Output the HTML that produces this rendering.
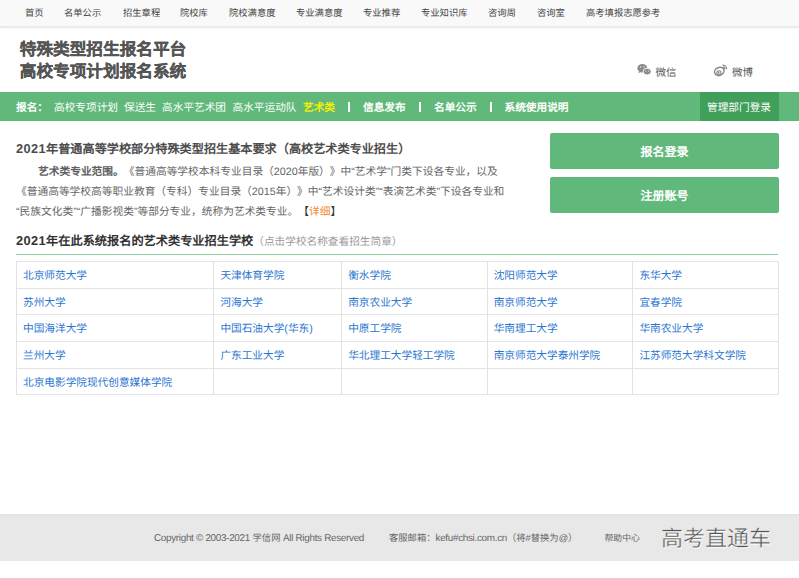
<!DOCTYPE html>
<html lang="zh-CN">
<head>
<meta charset="utf-8">
<style>
*{margin:0;padding:0;box-sizing:border-box;}
html,body{width:799px;height:578px;overflow:hidden;background:#fff;}
body{text-rendering:geometricPrecision;text-spacing-trim:space-all;font-family:"Liberation Sans",sans-serif;color:#555;position:relative;}
.abs{position:absolute;white-space:nowrap;}
#topnav{position:absolute;left:0;top:0;width:799px;height:28px;background:#f9f9f9;border-bottom:2px solid #ebebeb;box-shadow:0 1px 2px rgba(0,0,0,0.03);}
#topnav span{position:absolute;top:7px;font-size:9.3px;line-height:12px;color:#444;}
#title{left:19.8px;top:38.5px;font-size:16.65px;line-height:22px;font-weight:bold;color:#555;-webkit-text-stroke:0.25px #555;}
.sns{font-size:10.5px;line-height:12px;color:#555;top:66.5px;}
#greenbar{position:absolute;left:0;top:92px;width:799px;height:29px;background:#60b97a;}
#greenbar span{position:absolute;top:9.7px;font-size:10.67px;line-height:13px;color:#fff;white-space:nowrap;}
#greenbar b{font-weight:bold;}
#admin{position:absolute;left:699.5px;top:92px;width:79.5px;height:29px;background:#40a05a;}
h1{position:absolute;left:16px;top:140.8px;font-size:12.15px;line-height:16px;font-weight:bold;color:#4c4c4c;white-space:nowrap;}
.p{position:absolute;font-size:10.72px;line-height:14px;color:#666;white-space:nowrap;}
.btn{position:absolute;left:550px;width:229px;height:36px;background:#60b97a;border-radius:2px;color:#fff;font-weight:bold;font-size:12px;line-height:38px;text-align:center;}
h2{position:absolute;left:16px;top:233px;font-size:12.2px;line-height:16px;font-weight:bold;color:#333;white-space:nowrap;}
.d{letter-spacing:0.4px;font-size:12.8px;}
h2 small{font-weight:normal;font-size:10.67px;color:#999;}
#gline{position:absolute;left:16px;top:254px;width:762px;height:1px;background:#8fcf9f;}
table{position:absolute;left:16px;top:261px;border-collapse:collapse;table-layout:fixed;}
td{border:1px solid #e3e3e3;height:26.7px;padding:1.4px 0 0 6px;font-size:10.67px;color:#2b76d2;white-space:nowrap;vertical-align:middle;}
#footer{position:absolute;left:0;top:514px;width:799px;height:47px;background:linear-gradient(#e3e3e3,#e8e8e8 4px);}
#footer span{position:absolute;top:18px;font-size:9.3px;line-height:12px;color:#666;white-space:nowrap;}
#footer em{font-style:normal;font-size:9.9px;letter-spacing:-0.3px;}
#wm{position:absolute;left:661px;top:526px;font-size:22px;line-height:26px;color:#555;-webkit-text-stroke:0.4px #e8e8e8;text-shadow:0.8px 0.8px 0.6px #fff;white-space:nowrap;font-weight:300;}
</style>
</head>
<body>
<div id="topnav">
<span style="left:25px">首页</span>
<span style="left:64px">名单公示</span>
<span style="left:123px">招生章程</span>
<span style="left:180px">院校库</span>
<span style="left:229px">院校满意度</span>
<span style="left:296px">专业满意度</span>
<span style="left:363px">专业推荐</span>
<span style="left:421px">专业知识库</span>
<span style="left:488px">咨询周</span>
<span style="left:537px">咨询室</span>
<span style="left:586px">高考填报志愿参考</span>
</div>

<div id="title" class="abs">特殊类型招生报名平台<br>高校专项计划报名系统</div>

<svg class="abs" style="left:630px;top:60px" width="24" height="20" viewBox="0 0 24 20">
<ellipse cx="12.3" cy="8.3" rx="4.9" ry="4.3" fill="#8a8a8a"/>
<path d="M9 11.5L8.3 13.2 10.3 12.2Z" fill="#8a8a8a"/>
<ellipse cx="17.2" cy="11.6" rx="4" ry="3.4" fill="#8a8a8a" stroke="#fff" stroke-width="0.9"/>
<circle cx="10.6" cy="6.9" r="0.65" fill="#fff"/><circle cx="13.9" cy="6.9" r="0.65" fill="#fff"/>
<circle cx="15.9" cy="11" r="0.55" fill="#fff"/><circle cx="18.5" cy="11" r="0.55" fill="#fff"/>
</svg>
<div class="abs sns" style="left:655.5px">微信</div>
<svg class="abs" style="left:710px;top:60px" width="20" height="20" viewBox="0 0 20 20">
<ellipse cx="9.3" cy="11.4" rx="4.9" ry="3.9" transform="rotate(-22 9.3 11.4)" fill="none" stroke="#8a8a8a" stroke-width="1.5"/>
<ellipse cx="8.9" cy="12.6" rx="2.1" ry="1.9" fill="none" stroke="#8a8a8a" stroke-width="1.1"/>
<circle cx="8.6" cy="12.5" r="0.9" fill="#8a8a8a"/>
<path d="M12.6 5.2A4.1 4.1 0 0 1 16.7 9.3M12.6 7.1A2.2 2.2 0 0 1 14.8 9.3" fill="none" stroke="#8a8a8a" stroke-width="1.2"/>
</svg>
<div class="abs sns" style="left:732px">微博</div>

<div id="greenbar">
<span style="left:16px"><b>报名：</b></span>
<span style="left:54px">高校专项计划</span>
<span style="left:124px">保送生</span>
<span style="left:162px">高水平艺术团</span>
<span style="left:232.5px">高水平运动队</span>
<span style="left:303px;color:#f5f000"><b>艺术类</b></span>
<i style="position:absolute;left:348.3px;top:10px;width:1.7px;height:10px;background:#fff"></i>
<span style="left:363px"><b>信息发布</b></span>
<i style="position:absolute;left:419.3px;top:10px;width:1.7px;height:10px;background:#fff"></i>
<span style="left:434px"><b>名单公示</b></span>
<i style="position:absolute;left:490.3px;top:10px;width:1.7px;height:10px;background:#fff"></i>
<span style="left:504.5px"><b>系统使用说明</b></span>
</div>
<div id="admin"></div>
<div class="abs" style="left:707px;top:102px;font-size:10.67px;line-height:13px;color:#fff">管理部门登录</div>

<h1><span class="d">2021</span>年普通高等学校部分特殊类型招生基本要求（高校艺术类专业招生）</h1>
<div class="p" style="left:38px;top:165px"><b style="color:#5e5e5e">艺术类专业范围。</b>《普通高等学校本科专业目录（2020年版）》中“艺术学”门类下设各专业，以及</div>
<div class="p" style="left:16px;top:184.5px">《普通高等学校高等职业教育（专科）专业目录（2015年）》中“艺术设计类”“表演艺术类”下设各专业和</div>
<div class="p" style="left:16px;top:204.5px">“民族文化类”“广播影视类”等部分专业，统称为艺术类专业。<span style="color:#333">【</span><span style="color:#f0892a">详细</span><span style="color:#333">】</span></div>

<div class="btn" style="top:133px">报名登录</div>
<div class="btn" style="top:177px">注册账号</div>

<h2><span class="d">2021</span>年在此系统报名的艺术类专业招生学校<small>（点击学校名称查看招生简章）</small></h2>
<div id="gline"></div>

<table>
<colgroup><col style="width:197.4px"><col style="width:127.8px"><col style="width:145.5px"><col style="width:145.7px"><col style="width:145.7px"></colgroup>
<tr><td>北京师范大学</td><td>天津体育学院</td><td>衡水学院</td><td>沈阳师范大学</td><td>东华大学</td></tr>
<tr><td>苏州大学</td><td>河海大学</td><td>南京农业大学</td><td>南京师范大学</td><td>宜春学院</td></tr>
<tr><td>中国海洋大学</td><td>中国石油大学(华东)</td><td>中原工学院</td><td>华南理工大学</td><td>华南农业大学</td></tr>
<tr><td>兰州大学</td><td>广东工业大学</td><td>华北理工大学轻工学院</td><td>南京师范大学泰州学院</td><td>江苏师范大学科文学院</td></tr>
<tr><td>北京电影学院现代创意媒体学院</td><td></td><td></td><td></td><td></td></tr>
</table>

<div id="footer">
<span style="left:154px"><em>Copyright © 2003-2021</em> 学信网 <em>All Rights Reserved</em></span>
<span style="left:389px">客服邮箱：<em>kefu#chsi.com.cn</em>（将#替换为@）</span>
<span style="left:604.5px;font-size:8.9px">帮助中心</span>
</div>
<div id="wm">高考直通车</div>
</body>
</html>
